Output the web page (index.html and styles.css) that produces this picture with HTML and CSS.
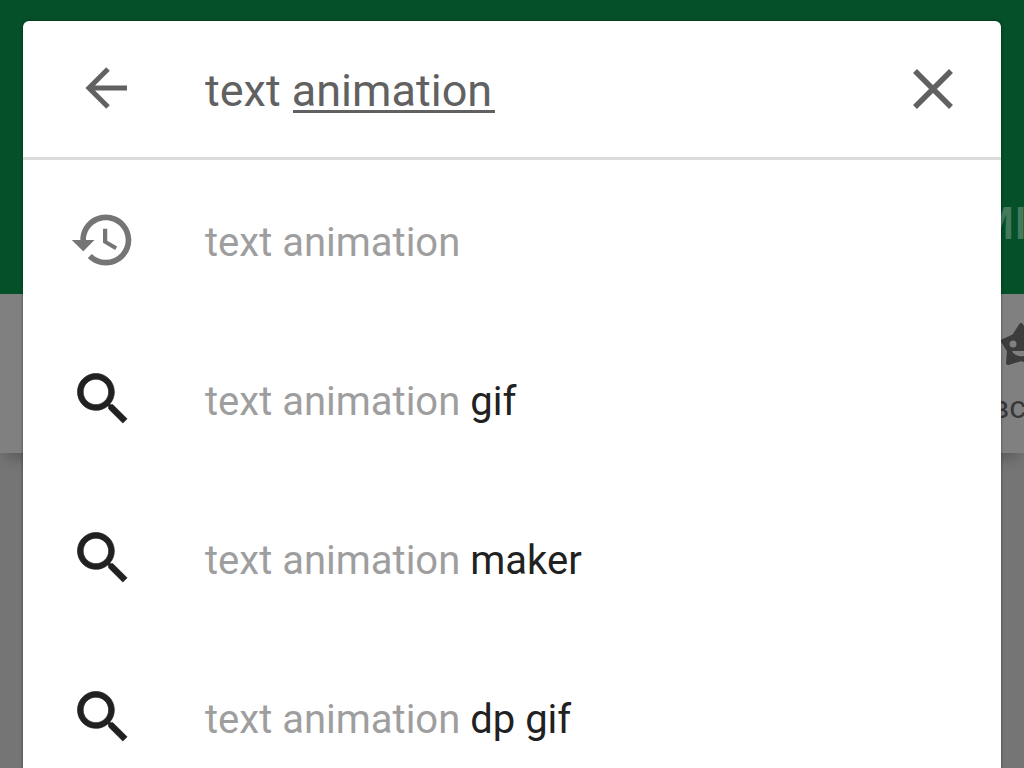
FILE: index.html
```html
<!DOCTYPE html>
<html lang="en">
<head>
<meta charset="utf-8">
<meta name="viewport" content="width=device-width, initial-scale=1">
<title>Search</title>
<link rel="stylesheet" href="styles.css">
</head>
<body>
<div class="store" aria-hidden="true">
  <div class="store-tabs"><span class="tab">MI</span></div>
  <div class="store-nav">
    <div class="nav-item">
      <svg class="star" viewBox="0 0 48 48"><path fill="#3c3c3c" stroke="#3c3c3c" stroke-width="4" stroke-linejoin="round" d="M21 4l7 11 12 3-7 11 1 13-13-4-13 4 1-12L3 20l11-5z"/><circle cx="13" cy="23" r="3.5" fill="#808080"/><circle cx="29" cy="23" r="3.5" fill="#808080"/><path fill="#808080" d="M12 30h19c-3 7-16 7-19 0z"/></svg>
      <span class="nav-label">вс</span>
    </div>
  </div>
</div>
<main class="panel">
  <form class="search-bar" role="search">
    <button class="icon-button back" type="button" aria-label="Back">
      <svg class="icon-small" viewBox="0 0 64 64"><path fill="none" stroke="#616161" stroke-width="5" d="M53 31H15M34 12L15 31l19 19"/></svg>
    </button>
    <input class="search-input" type="text" aria-label="Search" value="text animation" spellcheck="false" autocomplete="off">
    <button class="icon-button" type="button" aria-label="Clear">
      <svg class="icon-small" viewBox="0 0 64 64"><path fill="none" stroke="#616161" stroke-width="5.5" d="M14 14l36 36M50 14L14 50"/></svg>
    </button>
  </form>
  <ul class="suggestions">
    <li><a class="suggestion" href="#"><svg class="icon history" viewBox="0 0 24 24"><path d="M13 3c-4.97 0-9 4.03-9 9H1l3.89 3.89.07.14L9 12H6c0-3.87 3.13-7 7-7s7 3.13 7 7-3.13 7-7 7c-1.93 0-3.68-.79-4.94-2.06l-1.42 1.42C8.27 19.99 10.51 21 13 21c4.97 0 9-4.03 9-9s-4.03-9-9-9zm-1 5v5l4.28 2.54.72-1.21-3.5-2.08V8H12z"/></svg><span class="phrase">text animation</span></a></li>
    <li><a class="suggestion" href="#"><svg class="icon find" viewBox="0 0 24 24"><path d="M15.5 14h-.79l-.28-.27C15.41 12.59 16 11.11 16 9.5 16 5.91 13.09 3 9.5 3S3 5.91 3 9.5 5.91 16 9.5 16c1.61 0 3.09-.59 4.23-1.57l.27.28v.79l5 4.99L20.49 19l-4.99-5zm-6 0C7.01 14 5 11.99 5 9.5S7.01 5 9.5 5 14 7.01 14 9.5 11.99 14 9.5 14z"/></svg><span class="phrase">text animation <b>gif</b></span></a></li>
    <li><a class="suggestion" href="#"><svg class="icon find" viewBox="0 0 24 24"><path d="M15.5 14h-.79l-.28-.27C15.41 12.59 16 11.11 16 9.5 16 5.91 13.09 3 9.5 3S3 5.91 3 9.5 5.91 16 9.5 16c1.61 0 3.09-.59 4.23-1.57l.27.28v.79l5 4.99L20.49 19l-4.99-5zm-6 0C7.01 14 5 11.99 5 9.5S7.01 5 9.5 5 14 7.01 14 9.5 11.99 14 9.5 14z"/></svg><span class="phrase">text animation <b>maker</b></span></a></li>
    <li><a class="suggestion" href="#"><svg class="icon find" viewBox="0 0 24 24"><path d="M15.5 14h-.79l-.28-.27C15.41 12.59 16 11.11 16 9.5 16 5.91 13.09 3 9.5 3S3 5.91 3 9.5 5.91 16 9.5 16c1.61 0 3.09-.59 4.23-1.57l.27.28v.79l5 4.99L20.49 19l-4.99-5zm-6 0C7.01 14 5 11.99 5 9.5S7.01 5 9.5 5 14 7.01 14 9.5 11.99 14 9.5 14z"/></svg><span class="phrase">text animation <b>dp gif</b></span></a></li>
  </ul>
</main>
</body>
</html>
```
FILE: styles.css
```css
* {
  box-sizing: border-box;
}

body {
  margin: 0;
  height: 100vh;
  display: grid;
  grid-template: minmax(0, 1fr) / minmax(0, 1fr);
  overflow: hidden;
  background: #757575;
  font-family: Roboto, "Noto Sans", sans-serif;
}

.store,
.panel {
  grid-area: 1 / 1;
}

.store {
  overflow: hidden;
}

.store-tabs {
  display: flex;
  justify-content: flex-end;
  height: 294px;
  padding-top: 197px;
  background: #055028;
}

.tab {
  margin-right: -3px;
  color: #447a5c;
  font-size: 45px;
  font-weight: 500;
  line-height: 54px;
}

.store-nav {
  display: flex;
  justify-content: flex-end;
  height: 159px;
  padding-top: 27px;
  background: #808080;
  box-shadow: 0 12px 12px -6px #5c5c5c;
}

.nav-item {
  display: flex;
  flex-direction: column;
  gap: 18px;
  width: 57px;
  margin-right: -24px;
}

.star {
  width: 48px;
  height: 48px;
  margin-left: 9px;
}

.nav-label {
  color: #383838;
  font-size: 32px;
  line-height: 40px;
}

.panel {
  position: relative;
  margin: 21px 23px 0;
  overflow: hidden;
  background: #fff;
  border-radius: 6px 6px 0 0;
  box-shadow: 0 0 3px rgba(0, 0, 0, 0.5);
}

.search-bar {
  display: flex;
  align-items: center;
  height: 139px;
  padding: 0 36px 0 51px;
  border-bottom: 3px solid #dcdcdc;
}

.icon-button {
  display: flex;
  padding: 0;
  border: 0;
  background: none;
}

.back {
  margin-right: 67px;
}

.icon-small {
  width: 64px;
  height: 64px;
}

.search-input {
  flex: 1;
  min-width: 0;
  height: 64px;
  padding: 2px 0 0;
  border: 0;
  outline: 0;
  color: #616161;
  background: linear-gradient(#616161, #616161) 88px 53px / 202px 3px no-repeat;
  font: 45px/60px Roboto, "Noto Sans", sans-serif;
}

.suggestions {
  margin: 0;
  padding: 0;
  list-style: none;
}

.suggestion {
  display: flex;
  align-items: center;
  gap: 68px;
  height: 159px;
  padding-left: 46px;
  color: #9e9e9e;
  font-size: 40px;
  line-height: 48px;
  text-decoration: none;
}

.phrase {
  padding-top: 6px;
}

.suggestion b {
  color: #212121;
  font-weight: 400;
}

.icon {
  width: 68px;
  height: 68px;
}

.find {
  fill: #212121;
  stroke: #212121;
  stroke-width: 0.25;
}

.history {
  fill: #757575;
}
```
